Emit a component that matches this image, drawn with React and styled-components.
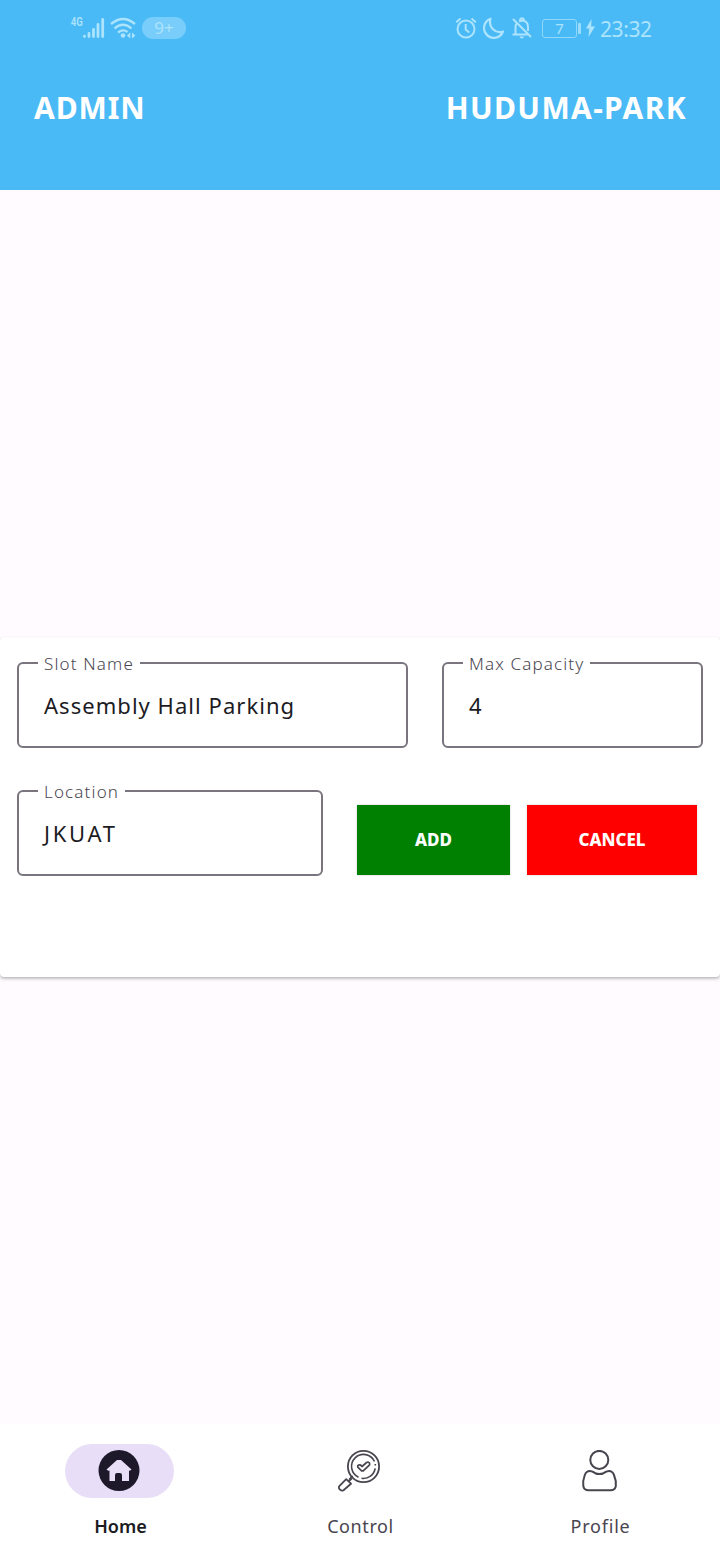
import React from "react";
import styled, { createGlobalStyle } from "styled-components";

const GlobalStyle = createGlobalStyle`
  * { box-sizing: border-box; }
  body { margin: 0; background: #fffbff; font-family: "Noto Sans", "Open Sans", sans-serif; }
`;

const Screen = styled.div`
  width: 720px;
  height: 1560px;
  display: flex;
  flex-direction: column;
  background: #fffbff;
  overflow: hidden;
`;

const Header = styled.header`
  height: 190px;
  background: #4abaf6;
  color: #fff;
`;

const StatusBar = styled.div`
  height: 56px;
  padding: 0 68px 0 70px;
  display: flex;
  justify-content: space-between;
  align-items: center;
  color: #ace3fd;
`;

const StatusGroup = styled.div`
  display: flex;
  align-items: center;
`;

const StatusIcon = styled.svg`
  display: block;
  margin-right: ${(p) => p.$gap || 0}px;
  fill: none;
  stroke: currentColor;
  stroke-width: 2;
`;

const NetworkLabel = styled.span`
  font: 600 13px/12px "Roboto", sans-serif;
  width: 13px;
  padding-left: 1px;
  margin-top: -13px;
  transform: scaleX(0.74);
  transform-origin: left;
`;

const CountPill = styled.span`
  width: 44px;
  height: 22px;
  border-radius: 11px;
  background: #78cdfa;
  font-size: 17px;
  line-height: 22px;
  text-align: center;
`;

const Battery = styled.span`
  width: 35px;
  height: 19px;
  border: 1px solid #8fd8fb;
  border-radius: 3px;
  font-size: 15px;
  line-height: 17px;
  text-align: center;
`;

const BatteryTip = styled.span`
  width: 3px;
  height: 11px;
  margin: 0 5px 0 1px;
  border-radius: 1px;
  background: #9bdcfc;
`;

const Clock = styled.span`
  width: 52px;
  padding-top: 1px;
  font-size: 21px;
  line-height: 24px;
  letter-spacing: -0.4px;
  white-space: nowrap;
`;

const TitleRow = styled.div`
  padding: 30px 33px 0 34px;
  display: flex;
  justify-content: space-between;
`;

const Title = styled.h1`
  margin: 0;
  font-size: 30px;
  line-height: 44px;
  font-weight: 700;
  letter-spacing: ${(p) => p.$spacing}px;
`;

const Content = styled.main`
  flex: 1;
  padding-top: 447px;
`;

const Card = styled.section`
  height: 340px;
  padding: 16px 17px 0;
  border-radius: 4px;
  background: #fff;
  box-shadow: 0 2px 3px rgba(0, 0, 0, 0.24), 0 0 1px rgba(0, 0, 0, 0.12);
`;

const FormRow = styled.div`
  display: flex;
  gap: 34px;
  margin-bottom: 33px;
`;

const Field = styled.fieldset`
  width: ${(p) => p.$width}px;
  height: 95px;
  min-width: 0;
  margin: 0;
  padding: 0 25px 0 19px;
  border: 2px solid #79747e;
  border-radius: 6px;
`;

const FieldLabel = styled.legend`
  width: ${(p) => p.$width}px;
  height: 20px;
  padding: 0 6px;
  font-size: 17px;
  line-height: 22px;
  font-weight: 300;
  letter-spacing: ${(p) => p.$spacing}px;
  color: #49454f;
  white-space: nowrap;
`;

const FieldValue = styled.div`
  padding: 16px 0 0 6px;
  font-size: 22px;
  line-height: 32px;
  letter-spacing: ${(p) => p.$spacing}px;
  color: #1c1b1f;
  white-space: nowrap;
`;

const Actions = styled.div`
  display: flex;
  gap: 17px;
  padding-top: 24px;
`;

const ActionButton = styled.button`
  width: ${(p) => p.$width}px;
  height: 70px;
  padding: 0;
  border: 0;
  background: ${(p) => p.$color};
  box-shadow: 0 0 2px rgba(0, 0, 0, 0.2);
  color: #fff;
  font: 800 17px/24px "Noto Sans", sans-serif;
`;

const BottomNav = styled.nav`
  height: 136px;
  padding-top: 20px;
  display: grid;
  grid-template-columns: repeat(3, 1fr);
  background: #fff;
`;

const NavItem = styled.a`
  display: flex;
  flex-direction: column;
  align-items: center;
  gap: 15px;
  color: ${(p) => (p.$active ? "#1c1b1f" : "#49454f")};
  font-size: 18px;
  line-height: 26px;
  font-weight: ${(p) => (p.$active ? 600 : 400)};
  letter-spacing: ${(p) => p.$spacing}px;
`;

const Indicator = styled.span`
  width: 109px;
  height: 54px;
  margin-right: 2px;
  border-radius: 27px;
  display: grid;
  place-items: center;
  background: ${(p) => (p.$active ? "#e8def8" : "transparent")};
`;

const NavIcon = styled.svg`
  width: 42px;
  height: 42px;
  fill: none;
  stroke: #49454f;
  stroke-width: 2;
`;

const NavLabel = styled.span`
  padding-left: 1px;
`;

function OutlinedField({ label, value, width, labelWidth, labelSpacing, spacing }) {
  return (
    <Field $width={width}>
      <FieldLabel $width={labelWidth} $spacing={labelSpacing}>{label}</FieldLabel>
      <FieldValue $spacing={spacing}>{value}</FieldValue>
    </Field>
  );
}

function SignalIcon() {
  return (
    <StatusIcon width="22" height="22" $gap={5} strokeLinecap="round">
      <path d="M1.5 19.2v.4M6 16.5v3.1M10.5 12.5v7.1M15 7.5v12.1M19.7 2.5v17.1" strokeWidth="2.8" />
    </StatusIcon>
  );
}

function WifiIcon() {
  return (
    <StatusIcon width="27" height="22" $gap={5}>
      <path d="M1 7Q13 -3 25 7M4.5 11.5Q13 4 21.5 11.5M8 15.5Q13 11.5 17.5 15" strokeWidth="2.3" />
      <path d="M13 16.2a2.3 2.3 0 1 0 .01 0ZM20.3 15.5v6l-3.4-3ZM22 15.5v6l3.4-3Z" fill="currentColor" stroke="none" />
    </StatusIcon>
  );
}

function AlarmIcon() {
  return (
    <StatusIcon width="22" height="22" $gap={6}>
      <circle cx="11" cy="12" r="8.5" />
      <path d="M10.7 7v5.5l3.5 3M1.2 5.2 5.5 1.5M16.5 1.5l4.3 3.7" />
    </StatusIcon>
  );
}

function MoonIcon() {
  return (
    <StatusIcon width="22" height="22" $gap={6} strokeLinejoin="round">
      <path d="M7.5 1.8A9.8 9.8 0 1 0 20 14.5C12.5 17 5 10 7.5 1.8Z" strokeWidth="2.2" />
    </StatusIcon>
  );
}

function BellOffIcon() {
  return (
    <StatusIcon width="22" height="22" $gap={9}>
      <path d="M2 2 20 20M1.5 17.5H17M4.5 17V10Q4.5 8 5.5 6.7M8 4.5Q10 3.5 12 3.8Q17 4.5 17 10v4M9 3.8Q9 1.3 11 1.3T13 3.8" />
      <path d="M8.5 19.5h4.5q-.5 2-2.2 2t-2.3-2Z" fill="currentColor" stroke="none" />
    </StatusIcon>
  );
}

function BoltIcon() {
  return (
    <StatusIcon width="9" height="18" $gap={5}>
      <path d="M5.5 0 0 9.5h3.2L2.5 18 9 7.5H5.2Z" fill="currentColor" stroke="none" />
    </StatusIcon>
  );
}

function HomeIcon() {
  return (
    <NavIcon viewBox="0 0 42 42">
      <circle cx="21" cy="20.5" r="20.5" fill="#1d192b" stroke="none" />
      <path d="M19 10h4L33.5 19.5q-1 1.5-2.5 1V31h-7V25q0-2-2-2h-3q-2 0-2 2v6H11.5V20.5q-2 .5-3-1Z" fill="#e8def8" stroke="none" />
    </NavIcon>
  );
}

function ControlIcon() {
  return (
    <NavIcon viewBox="0 0 42 42">
      <circle cx="25.5" cy="16.5" r="15.6" strokeWidth="1.8" />
      <path d="M20.5 27.3A12 12 0 1 1 36.5 11.5M37.3 14v1.5M37.2 18.3A12 12 0 0 1 23.5 28.3" strokeWidth="1.6" />
      <path d="M19.8 15.7q2.2-2 4.2.8l4.6-4q2.2-1 3 .8v1.5L25.2 20.8h-1.6L19.8 17.2Z" strokeWidth="1.7" strokeLinejoin="round" />
      <path d="m14.7 26-3.5 3.6M13.7 28.5 11 31M8.2 29.2l4.8 4.5-7.5 6.5q-1.7 1-3.5-.6t-.7-3.5Z" strokeWidth="1.8" strokeLinejoin="round" />
    </NavIcon>
  );
}

function ProfileIcon() {
  return (
    <NavIcon viewBox="0 0 42 42">
      <circle cx="21.3" cy="9.9" r="9" />
      <path d="M14.5 21.6Q9 19.5 6.8 25 4.5 31 5.3 36.3q1 4 5 4h22.5q4 0 5-4Q38.5 31 36 25q-2.2-5.5-7.7-3.4-7 5-13.8 0Z" />
    </NavIcon>
  );
}

export default function App() {
  return (
    <>
      <GlobalStyle />
      <Screen>
        <Header>
          <StatusBar>
            <StatusGroup>
              <NetworkLabel>4G</NetworkLabel>
              <SignalIcon />
              <WifiIcon />
              <CountPill>9+</CountPill>
            </StatusGroup>
            <StatusGroup>
              <AlarmIcon />
              <MoonIcon />
              <BellOffIcon />
              <Battery>7</Battery>
              <BatteryTip />
              <BoltIcon />
              <Clock>23:32</Clock>
            </StatusGroup>
          </StatusBar>
          <TitleRow>
            <Title $spacing={0.9}>ADMIN</Title>
            <Title $spacing={1.35}>HUDUMA-PARK</Title>
          </TitleRow>
        </Header>
        <Content>
          <Card>
            <FormRow>
              <OutlinedField label="Slot Name" value="Assembly Hall Parking" width={391} labelWidth={102} labelSpacing={1.15} spacing={1.04} />
              <OutlinedField label="Max Capacity" value="4" width={261} labelWidth={127} labelSpacing={1.13} spacing={0} />
            </FormRow>
            <FormRow>
              <OutlinedField label="Location" value="JKUAT" width={306} labelWidth={87} labelSpacing={1.15} spacing={2.7} />
              <Actions>
                <ActionButton $width={153} $color="#008000">ADD</ActionButton>
                <ActionButton $width={170} $color="#ff0000">CANCEL</ActionButton>
              </Actions>
            </FormRow>
          </Card>
        </Content>
        <BottomNav>
          <NavItem $active $spacing={0}>
            <Indicator $active><HomeIcon /></Indicator>
            <NavLabel>Home</NavLabel>
          </NavItem>
          <NavItem $spacing={0.6}>
            <Indicator><ControlIcon /></Indicator>
            <NavLabel>Control</NavLabel>
          </NavItem>
          <NavItem $spacing={0.8}>
            <Indicator><ProfileIcon /></Indicator>
            <NavLabel>Profile</NavLabel>
          </NavItem>
        </BottomNav>
      </Screen>
    </>
  );
}
